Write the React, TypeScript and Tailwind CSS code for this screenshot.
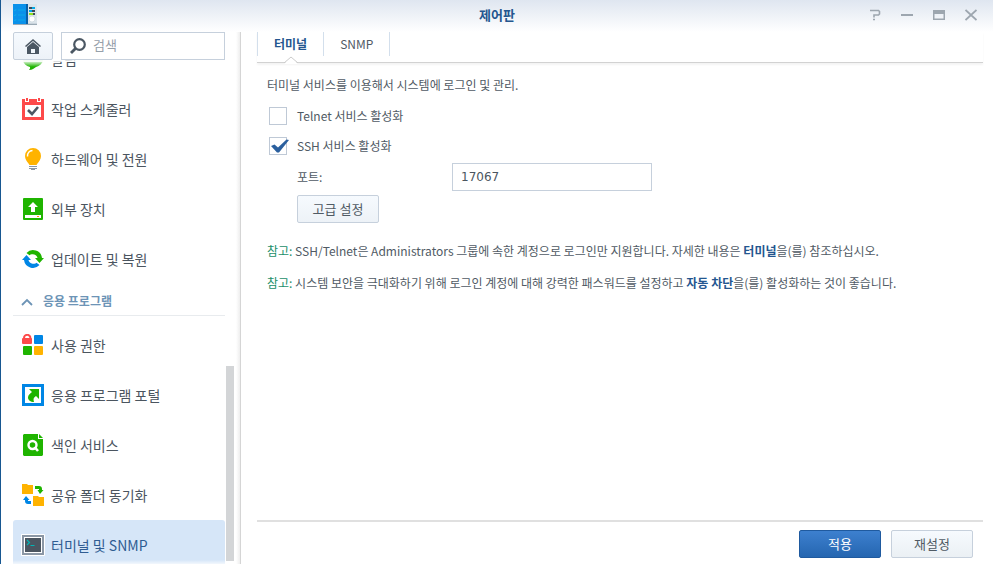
import { useState } from "react";
import type { ReactNode } from "react";

const BellIcon = () => (
  <svg width="22" height="22" viewBox="0 0 22 22">
    <defs>
      <linearGradient id="bubble" x1="0" y1="0" x2="0" y2="1">
        <stop offset="0.6" stopColor="#d4f2ce" />
        <stop offset="0.85" stopColor="#1fb400" />
      </linearGradient>
    </defs>
    <path d="M11 1c6 0 10.500 3.500 10.500 8.500 0 4.500-3 8.500-7.500 9.500-2 1.500-3.500 2.800-7 3 1-1 1.200-1.600 1-3C3 18 .5 14 .5 9.500.5 4.500 5 1 11 1z" fill="url(#bubble)" />
  </svg>
);

const CalendarIcon = () => (
  <svg width="22" height="22" viewBox="0 0 22 22">
    <path d="M0 1h3v3h4V1h8v3h4V1h3v21H0z" fill="#fd4a4a" />
    <path d="M4 0h2v3H4zM16 0h2v3h-2z" fill="#fd4a4a" />
    <path d="M3 7h16v12H3z" fill="#fff" />
    <path d="M6 12l4 4 6-7" fill="none" stroke="#4b5763" strokeWidth="2.600" />
  </svg>
);

const BulbIcon = () => (
  <svg width="22" height="22" viewBox="0 0 22 22">
    <path d="M11 0a8 8 0 0 1 8 8c0 3.500-2 5.500-3.500 7.500L14.500 17h-7l-1-1.500C5 13.500 3 11.500 3 8a8 8 0 0 1 8-8z" fill="#ffb300" />
    <path d="M5.500 8.500C5.300 5 7.500 2.700 10.500 2.500" fill="none" stroke="#fff" strokeWidth="1.500" />
    <path d="M7 18h8v1H7zM7 20h8v1H7z" fill="#8b97a5" />
    <path d="M9 21h4v1H9z" fill="#8b97a5" />
  </svg>
);

const DeviceIcon = () => (
  <svg width="22" height="22" viewBox="0 0 22 22">
    <rect x="1" width="20" height="22" rx="1" fill="#1fb400" />
    <path d="M11 4l5 5h-3v5H9V9H6zM3 17h16v3H3z" fill="#fff" />
    <path d="M15 18h2v1h-2z" fill="#ff9d00" />
  </svg>
);

const UpdateIcon = () => (
  <svg width="22" height="22" viewBox="0 0 22 22">
    <path d="M4.500 5A9 9 0 0 1 20 10h2l-4.500 5L13 10h2.500A5 5 0 0 0 7.500 7.300z" fill="#1fb400" />
    <path d="M17.500 17A9 9 0 0 1 2 12H0l4.500-5L9 12H6.500a5 5 0 0 0 8 2.700z" fill="#0086e5" />
  </svg>
);

const PrivilegeIcon = () => (
  <svg width="22" height="22" viewBox="0 0 22 22">
    <path d="M2 5V4a3.200 3.200 0 0 1 6.400 0v1" fill="none" stroke="#fd4a4a" strokeWidth="2" />
    <rect y="4" width="10" height="6" rx="1" fill="#fd4a4a" />
    <rect x="12" y="1" width="9" height="9" rx="1" fill="#0086e5" />
    <rect x="1" y="12" width="9" height="9" rx="1" fill="#1fb400" />
    <rect x="12" y="12" width="9" height="9" rx="1" fill="#ffb300" />
  </svg>
);

const PortalIcon = () => (
  <svg width="22" height="22" viewBox="0 0 22 22">
    <path d="M0 0h22v22H0z" fill="#0086e5" />
    <path d="M3 3h16v16H3z" fill="#fff" />
    <path d="M7 5h10v10l-3-3c-2.500 1.500-3 3-2 6-3.500 0-6-2-6-4.500C6 11 8 9.500 10 8z" fill="#1fb400" />
  </svg>
);

const IndexIcon = () => (
  <svg width="22" height="22" viewBox="0 0 22 22">
    <path d="M2 0h14v5h5v16l-1 1H2l-1-1V1z" fill="#1fb400" />
    <path d="M17 0l4 4h-4z" fill="#1fb400" />
    <circle cx="10.500" cy="11" r="4" fill="none" stroke="#fff" strokeWidth="2.400" />
    <path d="M12.500 13l3.500 4" stroke="#fff" strokeWidth="2.600" />
  </svg>
);

const SyncIcon = () => (
  <svg width="22" height="22" viewBox="0 0 22 22">
    <path d="M0 0h5l1 1h5v9H0zM11 12h5l1 1h5v9H11z" fill="#ffb300" />
    <path d="M13 2h4c2 0 3 1.200 3 3v1h1.500L18 10l-2.500-4H17V5h-4z" fill="#1fb400" />
    <path d="M9 20H6c-2 0-3-1.200-3-3v-1H1l3-4 3.500 4H6v1h3z" fill="#0086e5" />
  </svg>
);

const TerminalIcon = () => (
  <svg width="24" height="22" viewBox="0 0 24 22" className="shrink-0">
    <rect width="24" height="22" rx="1" fill="#fff" />
    <path d="M1 1h22v20H1z" fill="#8b97a5" />
    <path d="M3 3h18v16H3z" fill="#fff" />
    <path d="M4 4h16v14H4z" fill="#4b5560" />
    <path d="M6 6l2.500 2.500L6 11M9.500 11.500h4" fill="none" stroke="#00b5b5" strokeWidth="1.200" />
  </svg>
);

const PanelLogo = () => (
  <svg width="24" height="21" viewBox="0 0 24 21" aria-hidden="true">
    <path d="M0 0h24v20H0z" fill="#c9d3db" />
    <path d="M0 0h14v20H0z" fill="#0a91ea" />
    <path d="M13 0h2v20h-2z" fill="#0861a8" />
    <path d="M15 0h9v19h-9z" fill="#dbe4ea" />
    <path d="M1 6l1 1 1-2M1 11l1 1 1-2M1 16l1 1 1-2M5 6h7M5 11h7M5 16h7" fill="none" stroke="#0bb0e8" strokeWidth="0.800" />
    <path d="M16 3h6v2h-6zM16 6h6v2h-6zM16 9h6v2h-6z" fill="#3b4b5c" />
    <path d="M19 3h3v2h-3zM16 6h3v2h-3z" fill="#00a8e8" />
    <path d="M16 9h4v2h-4z" fill="#8fe01f" />
    <circle cx="19" cy="15" r="3" fill="#fff" stroke="#b8c6d1" strokeWidth="0.500" />
    <path d="M0 20h24v1H0z" fill="#9aa9b4" />
  </svg>
);

type Item = { name: string; icon: ReactNode };

const systemItems: Item[] = [
  { name: "알림", icon: <BellIcon /> },
  { name: "작업 스케줄러", icon: <CalendarIcon /> },
  { name: "하드웨어 및 전원", icon: <BulbIcon /> },
  { name: "외부 장치", icon: <DeviceIcon /> },
  { name: "업데이트 및 복원", icon: <UpdateIcon /> },
];

const appItems: Item[] = [
  { name: "사용 권한", icon: <PrivilegeIcon /> },
  { name: "응용 프로그램 포털", icon: <PortalIcon /> },
  { name: "색인 서비스", icon: <IndexIcon /> },
  { name: "공유 폴더 동기화", icon: <SyncIcon /> },
  { name: "터미널 및 SNMP", icon: <TerminalIcon /> },
];

function NavItem({ item, active }: { item: Item; active?: boolean }) {
  return (
    <li>
      <button
        type="button"
        className={
          active
            ? "flex h-[50px] w-full items-center gap-[7px] rounded-[3px] bg-[#d6e6f8] pl-[9px] text-left text-[14px] text-[#2f5c92]"
            : "flex h-[50px] w-full items-center gap-[7px] pl-[9px] text-left text-[14px] text-[#4b555f]"
        }
      >
        <span className="flex w-[22px] justify-center">{item.icon}</span>
        {item.name}
      </button>
    </li>
  );
}

function Sidebar() {
  return (
    <aside className="flex w-[240px] shrink-0 flex-col border-r border-[#d5d5d5] bg-[linear-gradient(to_left,#eeeeee,#ffffff_4px)] pl-3">
      <div className="flex gap-2 pr-[15px]">
        <button
          type="button"
          aria-label="홈"
          className="flex h-7 w-10 items-center justify-center rounded-[2px] border border-[#c6d0dc] bg-linear-to-b from-[#f6fafe] to-[#edf2f8]"
        >
          <svg width="16" height="16" viewBox="0 0 16 16">
            <path d="M0 8l8-7 8 7-1 1-7-6-7 6z" fill="#4b5763" />
            <path d="M2 9l6-5 6 5v7H2z" fill="#4b5763" />
            <path d="M6 11h4v4H6z" fill="#f1f6fb" />
          </svg>
        </button>
        <label className="flex h-7 min-w-0 flex-1 items-center gap-[7px] border border-[#c6d0dc] bg-white pl-2">
          <svg width="16" height="16" viewBox="0 0 16 16" className="shrink-0">
            <circle cx="9.500" cy="6.500" r="5.300" fill="none" stroke="#4b5763" strokeWidth="2.200" />
            <path d="M5.500 10.500L1 15" stroke="#4b5763" strokeWidth="2.800" />
          </svg>
          <input
            type="search"
            aria-label="검색"
            placeholder="검색"
            className="w-full min-w-0 bg-transparent pb-[2px] text-[13px] text-[#4b555f] outline-none placeholder:text-[#96a0aa]"
          />
        </label>
      </div>
      <div className="flex min-h-0 flex-1 gap-px">
        <nav className="relative min-w-0 flex-1 overflow-hidden">
          <ul className="-mt-[26px]">
            {systemItems.map((item) => (
              <NavItem key={item.name} item={item} />
            ))}
          </ul>
          <button
            type="button"
            className="mb-1 flex h-8 w-full items-center gap-[10px] border-b border-[#e8ebee] pt-[2px] pl-2 text-[12px] font-bold text-[#6d94b6]"
          >
            <svg width="12" height="8" viewBox="0 0 12 8" className="mt-[2px]">
              <path d="M1 7l5-5 5 5" fill="none" stroke="#6d94b6" strokeWidth="1.800" />
            </svg>
            응용 프로그램
          </button>
          <ul>
            {appItems.map((item) => (
              <NavItem key={item.name} item={item} active={item.name === "터미널 및 SNMP"} />
            ))}
          </ul>
          <div className="pointer-events-none absolute inset-x-0 top-0 h-[2px] bg-white/80" />
          <div className="pointer-events-none absolute inset-x-0 bottom-0 h-1 bg-linear-to-b from-white/0 to-white/70" />
        </nav>
        <div className="mr-[6px] flex w-2 flex-col justify-end pb-[3px]">
          <div className="h-[39%] bg-[#d3d5d7]" />
        </div>
      </div>
    </aside>
  );
}

function CheckRow({ label, initial }: { label: string; initial: boolean }) {
  const [on, setOn] = useState(initial);
  return (
    <label className="flex h-[30px] items-center gap-[10px] pl-[2px]">
      <span className="relative flex">
        <input
          type="checkbox"
          checked={on}
          onChange={() => setOn(!on)}
          className="h-[18px] w-[18px] appearance-none border border-[#bfc9d6] bg-white"
        />
        {on && (
          <svg width="20" height="18" viewBox="0 0 20 18" className="pointer-events-none absolute top-0 left-0">
            <path d="M2 9l3.500-1.500L9 10.500 17.500 2.500l2.500.5L10 15.500H8z" fill="#2a5f9e" />
          </svg>
        )}
      </span>
      {label}
    </label>
  );
}

export default function App() {
  return (
    <div className="flex h-screen flex-col overflow-hidden border-l border-[#175791] bg-white font-['Noto_Sans_CJK_KR','Noto_Sans',sans-serif] text-[12px] leading-[18px] text-[#505a64]">
      <header className="flex h-8 shrink-0 items-start bg-linear-to-b from-[#dfe6f0] to-white pt-1">
        <div className="flex flex-1 pr-1 pl-3">
          <PanelLogo />
        </div>
        <h1 className="pt-[2px] text-[13px] font-bold text-[#24568f]">제어판</h1>
        <div className="flex flex-1 justify-end gap-5 pt-[5px] pr-4 text-[#9da6af]">
          <button type="button" aria-label="도움말">
            <svg width="12" height="12" viewBox="0 0 12 12">
              <path d="M1 1.500h8.500l1 1V5l-1 1H5v2.500M4 10.500h2" fill="none" stroke="currentColor" strokeWidth="1.600" />
            </svg>
          </button>
          <button type="button" aria-label="최소화">
            <svg width="12" height="12" viewBox="0 0 12 12">
              <path d="M0 5h12v2H0z" fill="currentColor" />
            </svg>
          </button>
          <button type="button" aria-label="최대화">
            <svg width="12" height="12" viewBox="0 0 12 12">
              <path d="M0 1h12v10H0zM1.500 5v4.500h9V5z" fill="currentColor" fillRule="evenodd" />
            </svg>
          </button>
          <button type="button" aria-label="닫기">
            <svg width="12" height="12" viewBox="0 0 12 12">
              <path d="M0.500 1l11 10M11.500 1l-11 10" stroke="currentColor" strokeWidth="1.800" />
            </svg>
          </button>
        </div>
      </header>

      <div className="flex min-h-0 flex-1">
        <Sidebar />
        <main className="flex min-w-0 flex-1 flex-col pr-[10px] pl-4">
          <div className="flex h-[31px] shrink-0 border-b border-[#d2d2d2] shadow-[0_2px_2px_#f4f4f4]">
            <button
              type="button"
              className="relative h-6 border-x border-[#d3dfec] px-4 font-bold text-[#24568f]"
            >
              터미널
              <svg width="14" height="8" viewBox="0 0 14 8" className="absolute top-6 left-[26px]">
                <path d="M0 8l7-7 7 7z" fill="#fff" />
                <path d="M0 7l7-6 7 6" fill="none" stroke="#cbcbcb" />
              </svg>
            </button>
            <button type="button" className="h-6 border-r border-[#d3dfec] px-4">
              SNMP
            </button>
          </div>

          <form className="flex min-h-0 flex-1 flex-col pt-[13px] pl-[10px]" onSubmit={(e) => e.preventDefault()}>
            <p className="mb-[7px]">터미널 서비스를 이용해서 시스템에 로그인 및 관리.</p>
            <CheckRow label="Telnet 서비스 활성화" initial={false} />
            <CheckRow label="SSH 서비스 활성화" initial={true} />
            <div className="mt-[2px] flex items-center pl-[30px]">
              <label htmlFor="port" className="w-[155px]">
                포트:
              </label>
              <input
                id="port"
                defaultValue="17067"
                className="h-7 w-[200px] border border-[#c6d0dc] bg-white px-2 font-['DejaVu_Sans',sans-serif] text-[12px] text-[#4b555f] outline-none"
              />
            </div>
            <button
              type="button"
              className="mt-1 ml-[30px] h-7 w-[82px] rounded-[2px] border border-[#c6d0dc] bg-linear-to-b from-[#f6fafe] to-[#edf2f7] text-[13px]"
            >
              고급 설정
            </button>
            <p className="mt-[19px]">
              <span className="text-[#1b8f6a]">참고:</span> SSH/Telnet은 Administrators 그룹에 속한 계정으로 로그인만 지원합니다. 자세한 내용은{" "}
              <a href="#terminal" className="font-bold text-[#24568f]">터미널</a>을(를) 참조하십시오.
            </p>
            <p className="mt-[14px]">
              <span className="text-[#1b8f6a]">참고:</span> 시스템 보안을 극대화하기 위해 로그인 계정에 대해 강력한 패스워드를 설정하고{" "}
              <a href="#autoblock" className="font-bold text-[#24568f]">자동 차단</a>을(를) 활성화하는 것이 좋습니다.
            </p>
          </form>

          <footer className="flex shrink-0 justify-end gap-[10px] border-t-2 border-[#e0e0e0] pt-2 pr-[10px] pb-[6px] text-[13px]">
            <button
              type="button"
              className="h-7 w-[82px] rounded-[2px] border border-[#1f5a9f] bg-linear-to-b from-[#3d80cf] to-[#2566b0] text-white"
            >
              적용
            </button>
            <button
              type="button"
              className="h-7 w-[82px] rounded-[2px] border border-[#c6d0dc] bg-linear-to-b from-[#f6fafe] to-[#ebf0f4]"
            >
              재설정
            </button>
          </footer>
        </main>
      </div>
    </div>
  );
}
